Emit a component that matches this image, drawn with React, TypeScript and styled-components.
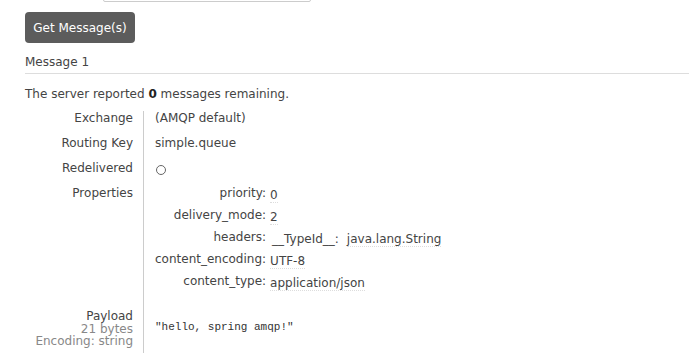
import React from "react";
import styled, { createGlobalStyle } from "styled-components";

const GlobalStyle = createGlobalStyle`
  body {
    margin: 0;
    background: #fff;
    color: #444;
    font: 12px "DejaVu Sans", Verdana, sans-serif;
  }
`;

const Page = styled.div`
  padding-left: 25px;
  overflow: hidden;
  height: 364px;
`;

const FormRow = styled.div`
  display: flex;
  align-items: flex-end;
  margin-top: -22px;
  height: 24px;
`;

const FormLabel = styled.label`
  width: 78px;
  text-align: right;
  padding-bottom: 4px;
`;

const TextInput = styled.input`
  box-sizing: border-box;
  width: 208px;
  height: 24px;
  border: 1px solid #ccc;
  border-radius: 2px;
`;

const Button = styled.button`
  display: block;
  margin-top: 10px;
  width: 110px;
  height: 31px;
  background: #5c5c5c;
  color: #fff;
  border: none;
  border-radius: 4px;
  font: 12px "DejaVu Sans", Verdana, sans-serif;
`;

const Heading = styled.h3`
  margin: 12px 0 0;
  padding-bottom: 4px;
  font-size: 12px;
  font-weight: normal;
  border-bottom: 1px solid #ddd;
`;

const Note = styled.p`
  margin: 13px 0 10px;
`;

const Strong = styled.b`
  color: #222;
`;

const Table = styled.table`
  border-collapse: collapse;
`;

const Th = styled.th<{ $last?: boolean }>`
  width: 108px;
  padding: ${(p) => (p.$last ? "2px 10px 6px 0" : "0 10px 11px 0")};
  text-align: right;
  vertical-align: top;
  font-weight: normal;
  color: #444;
  border-right: 1px solid #ccc;
`;

const Td = styled.td`
  padding: 0 0 11px 11px;
  vertical-align: top;
`;

const Sub = styled.div`
  color: #888;
  line-height: 12px;
`;

const Radio = styled.span`
  display: block;
  width: 8px;
  height: 8px;
  border: 1px solid #666;
  border-radius: 50%;
  margin: 4px 0 0 1px;
`;

const PropsTable = styled.table`
  border-collapse: collapse;
`;

const PropKey = styled.th`
  width: 110px;
  padding: 0 4px 0 0;
  height: 22px;
  text-align: right;
  font-weight: normal;
  vertical-align: top;
`;

const PropVal = styled.td`
  padding: 2px 0 0;
  vertical-align: top;
`;

const HeaderKey = styled.span`
  display: inline-block;
  margin: 0 8px 0 2px;
`;

const Val = styled.span`
  border-bottom: 1px dotted #ddd;
`;

const Payload = styled.pre`
  margin: 14px 0 0;
  font: 11px "Liberation Mono", monospace;
  color: #333;
`;

const props: [string, React.ReactNode][] = [
  ["priority:", <Val>0</Val>],
  ["delivery_mode:", <Val>2</Val>],
  [
    "headers:",
    <>
      <HeaderKey>__TypeId__:</HeaderKey>
      <Val>java.lang.String</Val>
    </>,
  ],
  ["content_encoding:", <Val>UTF-8</Val>],
  ["content_type:", <Val>application/json</Val>],
];

export default function App() {
  return (
    <>
      <GlobalStyle />
      <Page>
        <FormRow>
          <FormLabel>Messages:</FormLabel>
          <TextInput defaultValue="1" />
        </FormRow>
        <Button>Get Message(s)</Button>
        <Heading>Message 1</Heading>
        <Note>
          The server reported <Strong>0</Strong> messages remaining.
        </Note>
        <Table>
          <tbody>
            <tr>
              <Th>Exchange</Th>
              <Td>(AMQP default)</Td>
            </tr>
            <tr>
              <Th>Routing Key</Th>
              <Td>simple.queue</Td>
            </tr>
            <tr>
              <Th>Redelivered</Th>
              <Td>
                <Radio />
              </Td>
            </tr>
            <tr>
              <Th>Properties</Th>
              <Td>
                <PropsTable>
                  <tbody>
                    {props.map(([k, v]) => (
                      <tr key={k}>
                        <PropKey>{k}</PropKey>
                        <PropVal>{v}</PropVal>
                      </tr>
                    ))}
                  </tbody>
                </PropsTable>
              </Td>
            </tr>
            <tr>
              <Th $last>
                <div>Payload</div>
                <Sub>21 bytes</Sub>
                <Sub>Encoding: string</Sub>
              </Th>
              <Td>
                <Payload>"hello, spring amqp!"</Payload>
              </Td>
            </tr>
          </tbody>
        </Table>
      </Page>
    </>
  );
}
